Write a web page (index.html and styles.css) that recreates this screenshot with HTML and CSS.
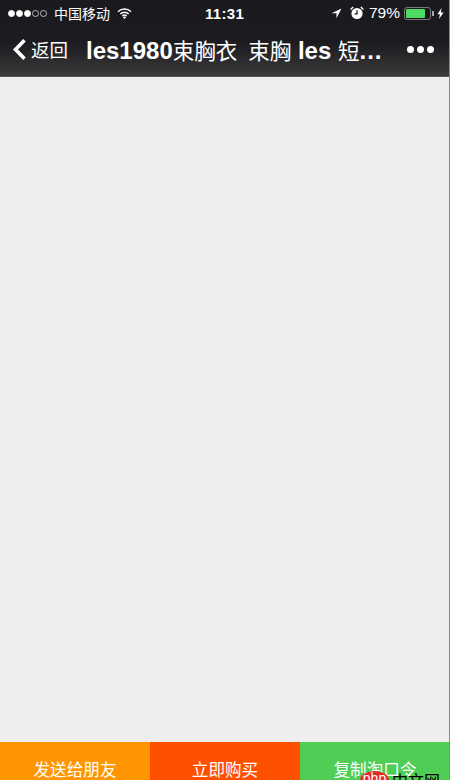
FILE: index.html
```html
<!DOCTYPE html>
<html lang="zh">
<head>
<meta charset="utf-8">
<title>les1980</title>
<link rel="stylesheet" href="styles.css">
</head>
<body>
<div class="phone">
  <header class="top">
    <div class="status">
      <div class="status-left">
        <span class="dots"><i class="dot"></i><i class="dot"></i><i class="dot"></i><i class="dot off"></i><i class="dot off"></i></span>
        <span class="carrier">中国移动</span>
        <svg class="wifi" width="15" height="11" viewBox="0 0 15 11"><path d="M1 3.8a9.2 9.2 0 0 1 13 0M3.3 6a6 6 0 0 1 8.4 0M5.4 8.1a3 3 0 0 1 4.2 0" fill="none" stroke="#fff" stroke-width="1.5"/><path d="M7.5 11 5.9 9.3a2.3 2.3 0 0 1 3.2 0z" fill="#fff"/></svg>
      </div>
      <div class="clock">11:31</div>
      <div class="status-right">
        <svg class="loc" width="11" height="11" viewBox="0 0 11 11"><path d="M10.5 .5 .5 5.2h5v5z" fill="#fff"/></svg>
        <svg class="alarm" width="14" height="14" viewBox="0 0 14 14"><circle cx="7" cy="7.5" r="5.6" fill="#fff"/><path d="M7 4.2v3.6H4.6" fill="none" stroke="#1c1c20" stroke-width="1.3"/><path d="M.6 3.4 3.2.9M13.4 3.4 10.8.9" stroke="#fff" stroke-width="1.4"/></svg>
        <span class="pct">79%</span>
        <span class="battery"><span class="battery-fill"></span></span>
        <span class="battery-tip"></span>
        <svg class="bolt" width="7" height="11" viewBox="0 0 7 11"><path d="M4.6 0 .4 6.2h2.5L2 11l4.6-6.6H3.8z" fill="#fff"/></svg>
      </div>
    </div>
    <nav class="nav">
      <div class="back">
        <svg class="chev" width="15" height="23" viewBox="0 0 15 23"><path d="M12.5 2.2 3.5 11.5l9 9.3" fill="none" stroke="#fff" stroke-width="3.6"/></svg>
        <span>返回</span>
      </div>
      <div class="title">les1980<span class="cjk">束胸衣 束胸</span> les <span class="cjk">短</span><span class="ellipsis">...</span></div>
      <div class="more"><i></i><i></i><i></i></div>
    </nav>
  </header>
  <main class="content"></main>
  <footer class="actions">
    <div class="action send">发送给朋友</div>
    <div class="action buy">立即购买</div>
    <div class="action copy">复制淘口令</div>
  </footer>
  <div class="mark"><span class="mark-php">php</span><span class="mark-cn">中文网</span></div>
</div>
</body>
</html>
```
FILE: styles.css
```css
* { box-sizing: border-box; }
html, body { margin: 0; padding: 0; }
body { width: 450px; height: 780px; overflow: hidden; font-family: "Liberation Sans", "Noto Sans CJK SC", sans-serif; }
.phone { position: relative; width: 450px; height: 780px; display: flex; flex-direction: column; overflow: hidden; background: #eeeeee; border-right: 1px solid #8a8a8a; }
.top { height: 77px; flex: none; color: #fff; background: linear-gradient(#1a1a1e 0, #1c1c20 42px, #3a3a3c 76px); border-bottom: 1px solid #555; margin-right: -1px; }
.status { height: 25px; display: flex; align-items: center; justify-content: space-between; padding: 1px 6px 0 8px; position: relative; }
.status-left { display: flex; align-items: center; width: 160px; }
.dots { display: flex; gap: 1px; }
.dot { width: 7px; height: 7px; border-radius: 50%; background: #fff; border: 1px solid #fff; }
.dot.off { background: transparent; border: 1px solid #bbb; }
.carrier { font-size: 14px; margin-left: 7px; }
.wifi { margin-left: 7px; }
.clock { font-size: 15px; font-weight: 700; letter-spacing: .3px; position: absolute; left: 205px; }
.status-right { display: flex; align-items: center; }
.alarm { margin-left: 8px; }
.pct { font-size: 15.5px; margin-left: 5px; }
.battery { width: 27px; height: 13px; margin-left: 4px; border: 1px solid #777; border-radius: 3px; padding: 1px; display: block; }
.battery-fill { display: block; width: 19px; height: 9px; background: #4cd964; border-radius: 1px; }
.battery-tip { width: 2px; height: 5px; background: #aaa; margin-left: 1px; }
.bolt { margin-left: 3px; }
.nav { height: 51px; display: flex; align-items: center; padding-bottom: 3px; position: relative; }
.back { display: flex; align-items: center; font-size: 18.5px; width: 86px; padding-left: 12px; flex: none; }
.chev { margin-right: 4px; }
.title { font-size: 24px; font-weight: 700; white-space: nowrap; flex: none; }
.cjk { font-size: 21.5px; font-weight: 400; word-spacing: 5px; }
.ellipsis { letter-spacing: 1px; }
.more { position: absolute; left: 407px; top: 21px; display: flex; gap: 3px; }
.more i { width: 7px; height: 7px; border-radius: 50%; background: #fff; display: block; }
.content { flex: 1; }
.actions { height: 38px; flex: none; display: flex; margin-right: -1px; }
.action { width: 150px; padding-top: 17px; font-size: 16.6px; line-height: 23px; text-align: center; color: #fff; white-space: nowrap; }
.send { background: #ff9500; }
.buy { background: #ff5000; }
.copy { background: #50cd55; }
.mark { position: absolute; left: 360px; top: 771px; display: flex; align-items: flex-start; }
.mark-php { width: 29px; height: 19px; border-radius: 50%; background: #e8272c; color: #fff; font-size: 14px; line-height: 15px; text-align: center; }
.mark-cn { font-size: 16px; color: #000; line-height: 20px; margin-left: 3px; margin-top: 1px; }
```
